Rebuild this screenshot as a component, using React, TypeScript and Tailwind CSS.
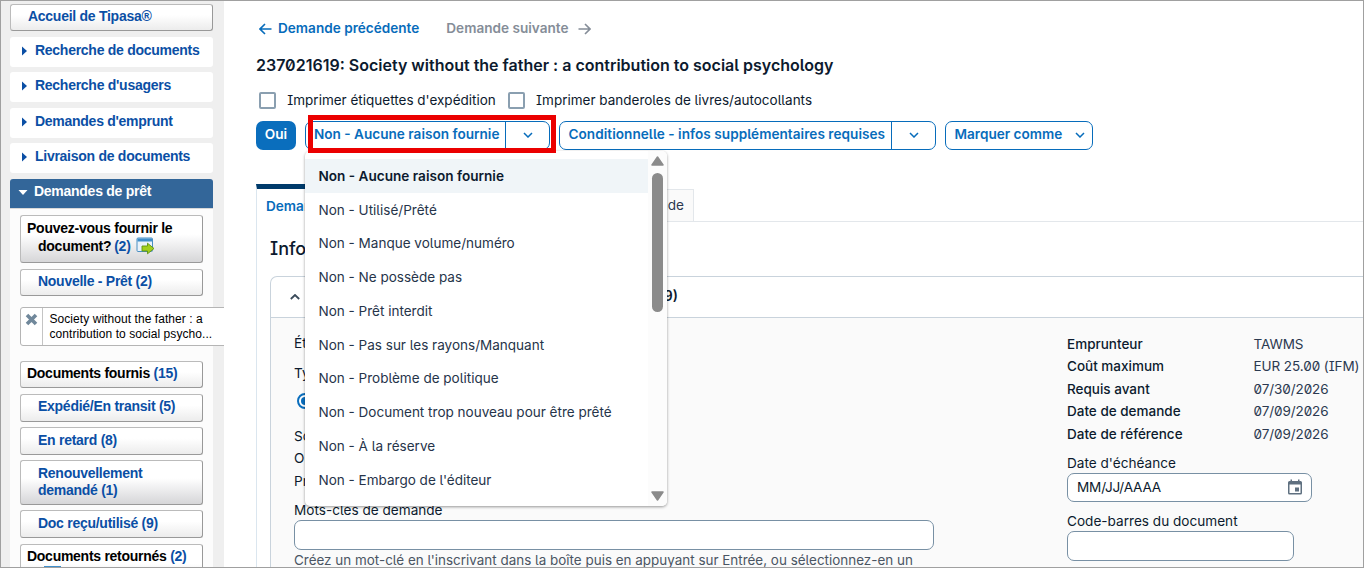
import React from "react";

const sideText = "text-[14px] leading-[17px] tracking-[-0.270px] font-bold text-[#0b4fa5]";
const sideButton =
  "flex shrink-0 rounded-[3px] border border-[#bbbbbb] border-r-[#999999] border-b-[#999999] bg-linear-to-b from-white from-40%";

function NavItem({ label }: { label: string }) {
  return (
    <div className="flex h-[30px] shrink-0 items-center rounded-[3px] bg-white pl-3 pb-1">
      <svg width="5" height="10" viewBox="0 0 5 10" className="mt-px">
        <path d="M0 0.5L5 5L0 9.5z" fill="#0b4fa5" />
      </svg>
      <span className={`ml-2 whitespace-nowrap ${sideText}`}>{label}</span>
    </div>
  );
}

function SideButton({ label, className }: { label: React.ReactNode; className: string }) {
  return (
    <div className={`${sideButton} ${className}`}>
      <span className={`whitespace-nowrap ${sideText}`}>{label}</span>
    </div>
  );
}

function Sidebar() {
  return (
    <aside className="relative flex h-full w-[223px] shrink-0 flex-col overflow-hidden bg-[#efefef] pt-[3px] pl-[9px] font-['Liberation_Sans',sans-serif]">
      <div className="flex w-[203px] flex-col">
        <SideButton label="Accueil de Tipasa®" className="h-[27px] to-[#ececec] pt-[3px] pl-[17px]" />
        <div className="mt-1.5 flex flex-col">
          <NavItem label="Recherche de documents" />
          <div className="h-[5px]" />
          <NavItem label="Recherche d'usagers" />
          <div className="h-1.5" />
          <NavItem label="Demandes d'emprunt" />
          <div className="h-[5px]" />
          <NavItem label="Livraison de documents" />
        </div>
        <div className="mt-1.5 flex h-[29px] items-center rounded-t-[3px] bg-[#336699] pb-1 pl-2">
          <svg width="10" height="5" viewBox="0 0 10 5" className="mt-0.5">
            <path d="M0.500 0H9.500L5 5z" fill="#fff" />
          </svg>
          <span className="ml-1.5 text-[14px] leading-[17px] tracking-[-0.270px] font-bold text-white">Demandes de prêt</span>
        </div>
        <div className="flex h-[370px] flex-col border-t border-[#d8d8d8] bg-[#fcfcfc] px-2.5 pt-1.5">
          <div className={`${sideButton} h-12 flex-col to-[#d6d6d8] pt-[3px] pl-1.5`}>
            <span className="text-[14px] leading-[18px] tracking-[-0.250px] font-bold whitespace-nowrap text-black">Pouvez-vous fournir le</span>
            <span className="flex pl-[11px] text-[14px] leading-[18px] tracking-[-0.250px] font-bold whitespace-nowrap text-black">
              document?<span className="ml-[3px] text-[#0b4fa5]">(2)</span>
              <svg width="19" height="18" viewBox="0 0 19 18" className="ml-[5px]">
                <rect x="1" y="1" width="15.500" height="13.500" rx="1" fill="#e9f2fa" stroke="#4a8fc2" />
                <rect x="1.500" y="1.500" width="14.500" height="3" fill="#3f8fcb" />
                <path d="M6 9h5.500v-2.800l6.500 5.300-6.500 5.300v-2.800h-5.500z" fill="#a2cf1d" stroke="#5f9410" strokeWidth="0.900" />
              </svg>
            </span>
          </div>
          <SideButton label="Nouvelle - Prêt (2)" className="mt-1.5 h-[27px] to-[#ececec] pt-[3px] pl-[17px]" />
          <div className="mt-[11px] flex h-[39px] w-[210px] shrink-0 rounded-[3px] border border-[#b5b5b5] bg-white">
            <div className="w-[22px] border-r border-[#c4c4c4] pt-[5px] pl-1">
              <svg width="13" height="13" viewBox="0 0 13 13">
                <path d="M2 2L11 11M11 2L2 11" stroke="#70889b" strokeWidth="3.600" />
              </svg>
            </div>
            <div className="pt-[4px] pl-[6.500px] text-[12px] leading-[15px] tracking-[0.060px] whitespace-nowrap text-black">
              Society without the father : a<br />contribution to social psycho...
            </div>
          </div>
          <SideButton
            label={<><span className="text-black">Documents fournis</span> (15)</>}
            className="mt-[15px] h-[27px] to-[#ececec] pt-[3px] pl-1.5"
          />
          <SideButton label="Expédié/En transit (5)" className="mt-1.5 h-7 to-[#ececec] pt-[3px] pl-[17px]" />
          <SideButton label="En retard (8)" className="mt-[5px] h-7 to-[#ececec] pt-[4px] pl-[17px]" />
          <SideButton label={<>Renouvellement<br />demandé (1)</>} className="mt-[5px] h-[45px] to-[#d6d6d8] pt-[4px] pl-[17px]" />
          <SideButton label="Doc reçu/utilisé (9)" className="mt-[5px] h-7 to-[#ececec] pt-[4px] pl-[17px]" />
          <div className={`${sideButton} mt-1.5 h-12 flex-col to-[#d6d6d8] pt-[3px] pl-1.5`}>
            <span className={`whitespace-nowrap ${sideText}`}>
              <span className="text-black">Documents retournés</span> (2)
            </span>
            <span className="mt-px ml-[17px] h-4 w-[17px] bg-[#3f8fcb]" />
          </div>
        </div>
      </div>
    </aside>
  );
}

function Chevron({ up = false, color = "#076cbb" }: { up?: boolean; color?: string }) {
  return (
    <svg width="10" height="6" viewBox="0 0 10 6" fill="none" className="shrink-0">
      <path d={up ? "M0.800 5L5 1L9.200 5" : "M1 1L5 5L9 1"} stroke={color} strokeWidth={up ? 1.8 : 1.5} />
    </svg>
  );
}

function Arrow({ right = false, color }: { right?: boolean; color: string }) {
  return (
    <svg width="13" height="12" viewBox="0 0 13 12" fill="none" className="mt-0.5 shrink-0">
      <path d={right ? "M0.500 6H12M7 1L12 6L7 11" : "M12.500 6H1M6 1L1 6L6 11"} stroke={color} strokeWidth="1.600" />
    </svg>
  );
}

const outline = "flex h-[29px] items-center rounded-[7px] border border-[#076cbb] bg-white";
const buttonText = "whitespace-nowrap text-[13.600px] font-semibold leading-[20px] text-[#076cbb]";

function Toolbar() {
  return (
    <div className="flex pt-[11px]">
      <button className="h-[29px] w-10 rounded-[7px] bg-[#0a6ebd] pb-[3px] text-[13.600px] leading-[20px] font-semibold text-white">Oui</button>
      <div className={`relative ml-[9px] w-[245px] ${outline}`}>
        <span className={`flex h-full w-[200px] items-center border-r border-[#076cbb] pb-[3px] pl-2 ${buttonText}`}>Non - Aucune raison fournie</span>
        <span className="flex flex-1 justify-center pb-px">
          <Chevron />
        </span>
        <div className="absolute -top-[7px] left-[2px] z-20 h-[38px] w-[248px] border-5 border-[#eb0000]" />
        <Menu />
      </div>
      <div className={`ml-[9px] w-[377px] ${outline}`}>
        <span className={`flex h-full w-[332px] items-center border-r border-[#076cbb] pb-[3px] pl-[8.500px] tracking-[0.035px] ${buttonText}`}>
          Conditionnelle - infos supplémentaires requises
        </span>
        <span className="flex flex-1 justify-center pb-px">
          <Chevron />
        </span>
      </div>
      <div className={`ml-[9px] w-[148px] justify-between pr-[7px] pl-[8.500px] ${outline}`}>
        <span className={`pb-[3px] ${buttonText}`}>Marquer comme</span>
        <span className="flex pb-px">
          <Chevron />
        </span>
      </div>
    </div>
  );
}

const reasons = [
  "Non - Aucune raison fournie",
  "Non - Utilisé/Prêté",
  "Non - Manque volume/numéro",
  "Non - Ne possède pas",
  "Non - Prêt interdit",
  "Non - Pas sur les rayons/Manquant",
  "Non - Problème de politique",
  "Non - Document trop nouveau pour être prêté",
  "Non - À la réserve",
  "Non - Embargo de l'éditeur",
];

function Menu() {
  return (
    <div className="absolute top-[29px] -left-px z-10 flex h-[355px] w-[362px] overflow-hidden rounded-[5px] bg-white shadow-[0_1px_3px_rgba(0,0,0,0.4)]">
      <ul className="flex-1 pt-[8.150px]">
        {reasons.map((r, i) => (
          <li
            key={r}
            className={
              i === 0
                ? "flex h-[33.750px] items-center bg-[#f0f5f8] pl-[13.500px] text-[13.600px] font-semibold whitespace-nowrap text-[#0c1a2e]"
                : "flex h-[33.750px] items-center pl-[13.500px] text-[13.530px] whitespace-nowrap text-[#26344a]"
            }
          >
            {r}
          </li>
        ))}
      </ul>
      <div className="flex w-[19px] flex-col items-center bg-[#fcfcfc] pt-[5px] pb-[5px]">
        <svg width="13" height="10" viewBox="0 0 13 10">
          <path d="M6.500 1L12 9H1z" fill="#8b8b8b" stroke="#8b8b8b" strokeWidth="1.500" strokeLinejoin="round" />
        </svg>
        <div className="mt-[7px] h-[139px] w-[11px] rounded-full bg-[#8b8b8b]" />
        <svg width="13" height="10" viewBox="0 0 13 10" className="mt-auto">
          <path d="M1 1H12L6.500 9z" fill="#8b8b8b" stroke="#8b8b8b" strokeWidth="1.500" strokeLinejoin="round" />
        </svg>
      </div>
    </div>
  );
}

function Checkbox({ label }: { label: string }) {
  return (
    <label className="flex items-center">
      <span className="h-[17px] w-[17px] rounded-[2px] border-2 border-[#8a9fb0] bg-white" />
      <span className="ml-[11.300px] text-[13.500px] leading-[20px] whitespace-nowrap text-[#0c1a2e]">{label}</span>
    </label>
  );
}

const details = [
  ["Emprunteur", "TAWMS"],
  ["Coût maximum", "EUR 25.00 (IFM)"],
  ["Requis avant", "07/30/2026"],
  ["Date de demande", "07/09/2026"],
  ["Date de référence", "07/09/2026"],
];

const field = "rounded-[7px] border border-[#7890a4] bg-white";

function RequestCard() {
  return (
    <section className="ml-[13px] flex h-[330px] flex-col rounded-tl-[7px] border-t border-l border-[#c9d3dc]">
      <header className="flex h-[41px] shrink-0 items-center border-b border-[#c9d3dc] pl-[19px]">
        <Chevron up color="#3a4a5a" />
        <span className="w-[378px] pb-1 text-right text-[14px] font-semibold text-[#0c1a2e]">(237021619)</span>
      </header>
      <div className="flex flex-1 bg-[#fafafa] text-[13.600px] leading-[22.500px] text-[#0c1a2e]">
        <div className="w-[796px] shrink-0 pt-[13.700px] pl-[23px]">
          <div>État</div>
          <div className="mt-[7.500px]">Type</div>
          <div className="mt-[8.500px] ml-[3px] flex h-4 w-4 items-center justify-center rounded-full border-2 border-[#0a6ebd] bg-white">
            <div className="h-2 w-2 rounded-full bg-[#0a6ebd]" />
          </div>
          <div className="mt-[16px]">Source</div>
          <div>Origine</div>
          <div>Prêt</div>
          <div className="mt-[6.800px]">Mots-clés de demande</div>
          <div className={`-mt-[1.500px] h-[30px] w-[640px] ${field}`} />
          <div className="-mt-px text-[13.450px] whitespace-nowrap text-[#4a5563]">
            Créez un mot-clé en l'inscrivant dans la boîte puis en appuyant sur Entrée, ou sélectionnez-en un
          </div>
        </div>
        <div className="flex-1 pt-[14.700px]">
          {details.map(([name, value]) => (
            <div key={name} className="flex whitespace-nowrap">
              <span className="w-[186.500px] shrink-0 text-[13.500px] font-medium">{name}</span>
              <span className="text-[13.500px] tracking-[-0.080px] text-[#2b3950]">{value}</span>
            </div>
          ))}
          <div className="mt-[6.800px]">Date d'échéance</div>
          <div className={`-mt-[1.500px] flex h-[29px] w-[245px] items-center justify-between pr-[9px] pl-[9px] ${field}`}>
            <span className="pb-px tracking-[-0.200px]">MM/JJ/AAAA</span>
            <svg width="14" height="16" viewBox="0 0 14 16" fill="#5f7080">
              <path fillRule="evenodd" d="M2.500 0.500h1.500v1.500h6v-1.500h1.500v1.500h1a1.500 1.500 0 0 1 1.500 1.500v10.500a1.500 1.500 0 0 1-1.500 1.500h-11a1.500 1.500 0 0 1-1.500-1.500v-10.500a1.500 1.500 0 0 1 1.500-1.500h1zM1.500 5.500v8.500h11v-8.500zM7 8.500h4v4h-4z" />
            </svg>
          </div>
          <div className="mt-2">Code-barres du document</div>
          <div className={`-mt-[1.500px] h-[30px] w-[227px] ${field}`} />
        </div>
      </div>
    </section>
  );
}

export default function App() {
  return (
    <div className="flex h-[568px] w-[1364px] overflow-hidden border border-[#a0a0a0] bg-white">
      <Sidebar />
      <main className="flex min-w-0 flex-1 flex-col pl-8 font-['Inter',sans-serif] [font-feature-settings:'ss02']">
        <nav className="mt-[17px] flex h-[20px] items-center pl-[3px] text-[13.600px] font-semibold">
          <Arrow color="#076cbb" />
          <span className="ml-1.5 text-[#076cbb]">Demande précédente</span>
          <span className="mr-[9.500px] ml-[27px] text-[#858d98]">Demande suivante</span>
          <Arrow right color="#858d98" />
        </nav>
        <h1 className="mt-[15px] text-[16px] leading-[24px] font-semibold whitespace-nowrap text-[#0c1a2e]">
          237021619: Society without the father : a contribution to social psychology
        </h1>
        <div className="mt-[13px] flex h-[20px] items-center gap-3 pl-[3px]">
          <Checkbox label="Imprimer étiquettes d'expédition" />
          <Checkbox label="Imprimer banderoles de livres/autocollants" />
        </div>
        <Toolbar />
        <div className="mt-[34px] flex h-[38px] shrink-0 border-b border-[#e3e7eb]">
          <div className="-mb-px w-[120px] border-t-5 border-l border-t-[#003b6b] border-l-[#dbe6ef] bg-white pt-[7px] pl-[9px] text-[13.600px] leading-[20px] font-semibold text-[#076cbb]">
            Demande
          </div>
          <div className="mt-[5px] w-[318px] border-t border-r border-[#e3e7eb] bg-[#fafafa] pt-[5px] pr-[9px] text-right text-[13.600px] leading-[20px] text-[#2b3950]">
            Historique de la demande
          </div>
        </div>
        <div className="border-l border-[#dbe6ef]">
          <h2 className="pt-[15px] pb-[15px] pl-[13px] text-[18px] leading-[24px] font-medium text-[#0c1a2e]">Informations</h2>
          <RequestCard />
        </div>
      </main>
    </div>
  );
}
